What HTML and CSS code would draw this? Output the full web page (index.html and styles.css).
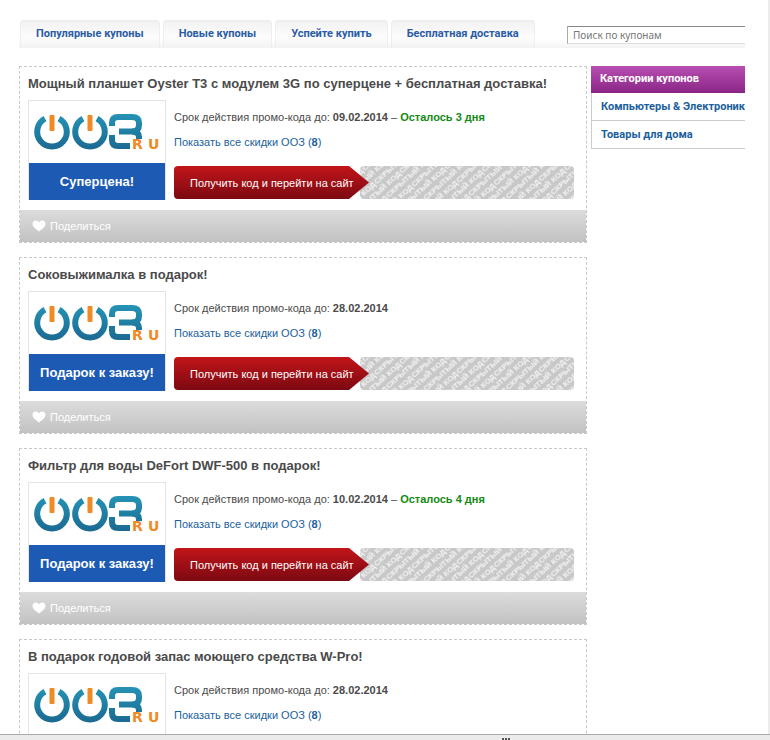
FILE: index.html
```html
<!DOCTYPE html>
<html lang="ru">
<head>
  <meta charset="UTF-8">
  <meta name="viewport" content="width=device-width, initial-scale=1.0">
  <title>Купоны и промо-коды</title>
  <link rel="stylesheet" href="styles.css">
</head>
<body>
  <svg class="defs" width="0" height="0" aria-hidden="true">
    <defs>
      <linearGradient id="blue" gradientUnits="userSpaceOnUse" x1="0" y1="13" x2="0" y2="48">
        <stop offset="0" stop-color="#2593b5"/>
        <stop offset="1" stop-color="#1b6a92"/>
      </linearGradient>
      <pattern id="secret" patternUnits="userSpaceOnUse" width="62" height="18" patternTransform="rotate(-42)">
        <g class="secret-text">
          <text x="0" y="7">СКРЫТЫЙ КОД</text>
          <text x="-36" y="16">СКРЫТЫЙ КОД</text>
          <text x="26" y="16">СКРЫТЫЙ КОД</text>
        </g>
      </pattern>
      <symbol id="logo" viewBox="0 0 136 62">
        <g fill="none" stroke="url(#blue)" stroke-width="6">
          <path d="M16 17.700A14.800 14.800 0 1 0 30 17.700"/>
          <path d="M54 17.700A14.800 14.800 0 1 0 68 17.700"/>
          <path d="M83 25V22Q83 16 89 16H103Q110 16 110 22V24Q110 30.500 103 30.500H90"/>
          <path d="M103 30.500Q110 30.500 110 36V38"/>
          <path d="M83 34V39Q83 45 89 45H101"/>
        </g>
        <g fill="#f08a24">
          <rect x="20.500" y="14" width="5" height="16" rx="1"/>
          <rect x="58.500" y="14" width="5" height="16" rx="1"/>
          <text class="logo-zone" x="103" y="48">R</text>
          <text class="logo-zone" x="119" y="48">U</text>
        </g>
      </symbol>
      <symbol id="heart" viewBox="0 0 14 12">
        <path d="M7 11.500C4 9 .5 7 .5 4C.5 2 2 .5 3.800 .5C5.500 .5 6.500 1.500 7 2.500C7.500 1.500 8.500 .5 10.200 .5C12 .5 13.500 2 13.500 4C13.500 7 10 9 7 11.500Z" fill="#fff"/>
      </symbol>
    </defs>
  </svg>

  <div class="viewport">
    <header class="topbar">
      <nav class="tabs">
        <a href="#">Популярные купоны</a>
        <a href="#">Новые купоны</a>
        <a href="#">Успейте купить</a>
        <a href="#">Бесплатная доставка</a>
      </nav>
      <input class="search" type="text" placeholder="Поиск по купонам" aria-label="Поиск по купонам">
    </header>

    <div class="columns">
      <main class="coupons">
        <article class="coupon">
          <div class="coupon-main">
            <h2>Мощный планшет Oyster T3 с модулем 3G по суперцене + бесплатная доставка!</h2>
            <div class="coupon-row">
              <div class="shop">
                <svg class="shop-logo" role="img" aria-label="003.ru"><use href="#logo"/></svg>
                <div class="shop-label">Суперцена!</div>
              </div>
              <div class="details">
                <p>Срок действия промо-кода до: <b>09.02.2014</b> – <b class="left">Осталось 3 дня</b></p>
                <p><a href="#">Показать все скидки ООЗ (<b>8</b>)</a></p>
                <div class="code">
                  <button class="get-code" type="button">Получить код и перейти на сайт</button>
                  <svg class="hidden-code"><rect width="100%" height="100%" fill="url(#secret)"/></svg>
                </div>
              </div>
            </div>
          </div>
          <footer class="share"><svg class="heart"><use href="#heart"/></svg><a href="#">Поделиться</a></footer>
        </article>

        <article class="coupon">
          <div class="coupon-main">
            <h2>Соковыжималка в подарок!</h2>
            <div class="coupon-row">
              <div class="shop">
                <svg class="shop-logo" role="img" aria-label="003.ru"><use href="#logo"/></svg>
                <div class="shop-label">Подарок к заказу!</div>
              </div>
              <div class="details">
                <p>Срок действия промо-кода до: <b>28.02.2014</b></p>
                <p><a href="#">Показать все скидки ООЗ (<b>8</b>)</a></p>
                <div class="code">
                  <button class="get-code" type="button">Получить код и перейти на сайт</button>
                  <svg class="hidden-code"><rect width="100%" height="100%" fill="url(#secret)"/></svg>
                </div>
              </div>
            </div>
          </div>
          <footer class="share"><svg class="heart"><use href="#heart"/></svg><a href="#">Поделиться</a></footer>
        </article>

        <article class="coupon">
          <div class="coupon-main">
            <h2>Фильтр для воды DeFort DWF-500 в подарок!</h2>
            <div class="coupon-row">
              <div class="shop">
                <svg class="shop-logo" role="img" aria-label="003.ru"><use href="#logo"/></svg>
                <div class="shop-label">Подарок к заказу!</div>
              </div>
              <div class="details">
                <p>Срок действия промо-кода до: <b>10.02.2014</b> – <b class="left">Осталось 4 дня</b></p>
                <p><a href="#">Показать все скидки ООЗ (<b>8</b>)</a></p>
                <div class="code">
                  <button class="get-code" type="button">Получить код и перейти на сайт</button>
                  <svg class="hidden-code"><rect width="100%" height="100%" fill="url(#secret)"/></svg>
                </div>
              </div>
            </div>
          </div>
          <footer class="share"><svg class="heart"><use href="#heart"/></svg><a href="#">Поделиться</a></footer>
        </article>

        <article class="coupon">
          <div class="coupon-main">
            <h2>В подарок годовой запас моющего средства W-Pro!</h2>
            <div class="coupon-row">
              <div class="shop">
                <svg class="shop-logo" role="img" aria-label="003.ru"><use href="#logo"/></svg>
              </div>
              <div class="details">
                <p>Срок действия промо-кода до: <b>28.02.2014</b></p>
                <p><a href="#">Показать все скидки ООЗ (<b>8</b>)</a></p>
              </div>
            </div>
          </div>
        </article>
      </main>

      <aside class="categories">
        <h3>Категории купонов</h3>
        <ul>
          <li><a href="#">Компьютеры &amp; Электроника</a></li>
          <li><a href="#">Товары для дома</a></li>
        </ul>
      </aside>
    </div>
  </div>
  <div class="scrollbar"><span class="grip"></span></div>
</body>
</html>
```

FILE: styles.css
```css
* {
  box-sizing: border-box;
}
body {
  margin: 0;
  height: 100vh;
  display: flex;
  flex-direction: column;
  overflow: hidden;
  font-family: "Liberation Sans", Arial, sans-serif;
  font-size: 11px;
  color: #4a4a4a;
  background-color: #fff;
}
a {
  color: #1b5f9e;
  text-decoration: none;
}
h2, h3, p, ul {
  margin: 0;
  padding: 0;
}
.defs {
  position: absolute;
}
.viewport {
  flex: 1;
  min-height: 0;
  overflow: hidden;
  padding: 20px 23px 0 19px;
  border-right: 2px solid #ececec;
}

/* top menu */
.topbar {
  display: flex;
  justify-content: space-between;
  align-items: flex-start;
  height: 28px;
  background: linear-gradient(#fff 70%, #f3f3f3);
}
.tabs {
  display: flex;
  gap: 3px;
  padding-left: 1px;
}
.tabs a {
  height: 28px;
  padding: 0 15px;
  line-height: 24px;
  font-family: Roboto, Arial, sans-serif;
  font-weight: bold;
  color: #2a5ca5;
  white-space: nowrap;
  border: 1px solid #eee;
  border-top-width: 2px;
  border-bottom: 0;
  border-radius: 4px 4px 0 0;
  background: linear-gradient(#f3f3f3, #fcfcfc 60%, #f3f3f3);
}
.search {
  width: 178px;
  height: 18px;
  margin-top: 6px;
  padding: 0 5px;
  font-family: "Noto Sans", Tahoma, sans-serif;
  font-size: 10px;
  border: 1px solid #ddd;
  border-top: 1px solid #888;
  border-left-color: #aaa;
  border-right: 0;
  background-color: #fff;
}
.search::placeholder {
  color: #777;
  opacity: 1;
}

.columns {
  display: grid;
  grid-template-columns: minmax(0, 1fr) 154px;
  gap: 4px;
  align-items: start;
  margin-top: 18px;
}

/* coupons */
.coupons {
  display: grid;
  grid-template-columns: minmax(0, 1fr);
  gap: 14px;
}
.coupon {
  border: 1px dashed #c8c8c8;
}
.coupon-main {
  padding: 7px 12px 10px 8px;
}
.coupon h2 {
  margin-bottom: 6px;
  font-size: 13px;
  line-height: 20px;
}
.coupon-row {
  display: flex;
  gap: 8px;
}
.shop {
  width: 138px;
  height: 100px;
  border: 1px solid #e4e4e4;
}
.shop-logo {
  display: block;
  width: 136px;
  height: 62px;
}
.logo-zone {
  font: bold 14px "DejaVu Sans", sans-serif;
}
.shop-label {
  height: 37px;
  line-height: 37px;
  font-size: 13px;
  font-weight: bold;
  color: #fff;
  text-align: center;
  background-color: #1c5ab3;
}
.details {
  flex: 1;
  min-width: 0;
  padding-top: 5px;
}
.details p {
  line-height: 25px;
}
.details .left {
  color: #138a13;
}
.code {
  display: flex;
  margin-top: 11px;
}
.get-code {
  z-index: 1;
  flex: none;
  width: 195px;
  height: 33px;
  padding: 0 16px;
  font: 11px "Liberation Sans", Arial, sans-serif;
  color: #fff;
  text-align: left;
  white-space: nowrap;
  border: 0;
  border-radius: 4px 0 0 4px;
  background: linear-gradient(#c21519, #7c0912);
  clip-path: polygon(0 0, 175px 0, 100% 50%, 175px 100%, 0 100%);
  cursor: pointer;
}
.hidden-code {
  flex: 1;
  width: 0;
  min-width: 0;
  height: 33px;
  margin-left: -9px;
  border-radius: 4px;
  background-color: #c8c8c8;
}
.secret-text {
  font: bold 8px "Liberation Sans", Arial, sans-serif;
  fill: #f4f4f4;
}
.share {
  display: flex;
  align-items: center;
  gap: 4px;
  height: 32px;
  padding-left: 12px;
  background: linear-gradient(#dcdcdc, #c2c2c2);
}
.share a {
  color: #fff;
}
.heart {
  width: 14px;
  height: 12px;
}

/* sidebar */
.categories {
  overflow: hidden;
  white-space: nowrap;
  font-family: Roboto, Arial, sans-serif;
  font-weight: bold;
}
.categories h3 {
  height: 27px;
  padding-left: 9px;
  line-height: 26px;
  font-size: 11px;
  color: #fff;
  background: linear-gradient(#b84fb4, #8a2585);
}
.categories ul {
  list-style: none;
}
.categories li {
  height: 28px;
  padding-left: 9px;
  line-height: 27px;
  border-left: 1px solid #ccc;
  border-bottom: 1px solid #ccc;
}

/* bottom scrollbar */
.scrollbar {
  display: flex;
  justify-content: center;
  height: 6px;
  padding: 3px 0 0 242px;
  border-top: 1px solid #aaa;
  background-color: #ebebeb;
}
.grip {
  width: 8px;
  height: 2px;
  background: repeating-linear-gradient(90deg, #555 0 2px, #ebebeb 2px 3px);
}
```
